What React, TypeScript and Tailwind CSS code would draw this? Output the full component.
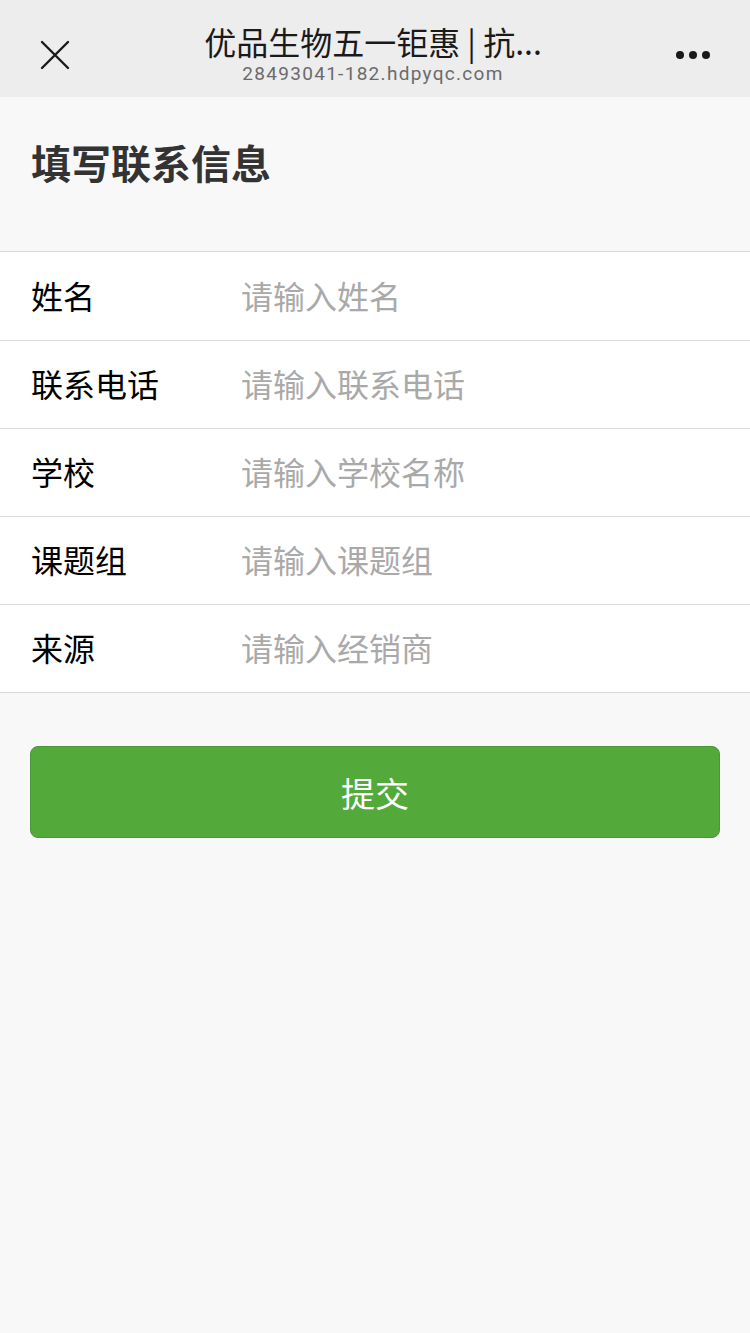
const font = "font-['Noto_Sans_CJK_SC','Noto_Sans',sans-serif]";

const fields = [
  { label: "姓名", ph: "请输入姓名" },
  { label: "联系电话", ph: "请输入联系电话" },
  { label: "学校", ph: "请输入学校名称" },
  { label: "课题组", ph: "请输入课题组" },
  { label: "来源", ph: "请输入经销商" },
];

export default function App() {
  return (
    <div className={"min-h-[1333px] bg-[#f8f8f8] " + font}>
      <div className="flex h-[97px] items-center bg-[#ededed] px-[40px] pt-[11px]">
        <svg width="30" height="30" viewBox="0 0 30 30" className="mt-[2px] shrink-0">
          <path d="M2 2 L28 28 M28 2 L2 28" stroke="#1a1a1a" strokeWidth="2.4" strokeLinecap="round" />
        </svg>
        <div className="flex flex-1 flex-col items-center">
          <div className="text-[32px] leading-[34px] text-[#1a1a1a]">优品生物五一钜惠 | 抗...</div>
          <div className="mt-[5px] font-['Roboto',sans-serif] text-[19px] leading-[22px] tracking-[1.3px] text-[#6b6b6b]">28493041-182.hdpyqc.com</div>
        </div>
        <div className="mt-[2px] flex w-[34px] shrink-0 justify-end gap-[5px]">
          <span className="h-[8px] w-[8px] rounded-full bg-[#1a1a1a]" />
          <span className="h-[8px] w-[8px] rounded-full bg-[#1a1a1a]" />
          <span className="h-[8px] w-[8px] rounded-full bg-[#1a1a1a]" />
        </div>
      </div>

      <div className="flex h-[154px] items-start px-[31px] pt-[37px]">
        <h1 className="text-[40px] font-bold leading-[56px] text-[#333]">填写联系信息</h1>
      </div>

      <div className="border-y border-[#d9d9d9] bg-white">
        {fields.map((f, i) => (
          <div key={f.label} className={"flex h-[88px] items-center pb-[3px] " + (i > 0 ? "border-t border-[#d9d9d9]" : "")}>
            <div className="w-[241px] pl-[31px] text-[32px] text-black">{f.label}</div>
            <div className="text-[32px] text-[#a9a9a9]">{f.ph}</div>
          </div>
        ))}
      </div>

      <div className="px-[30px] pt-[53px]">
        <button className="flex h-[92px] w-full items-center justify-center rounded-[8px] border border-[#48963a] bg-[#53aa3a] text-[34px] text-white">
          提交
        </button>
      </div>
    </div>
  );
}
